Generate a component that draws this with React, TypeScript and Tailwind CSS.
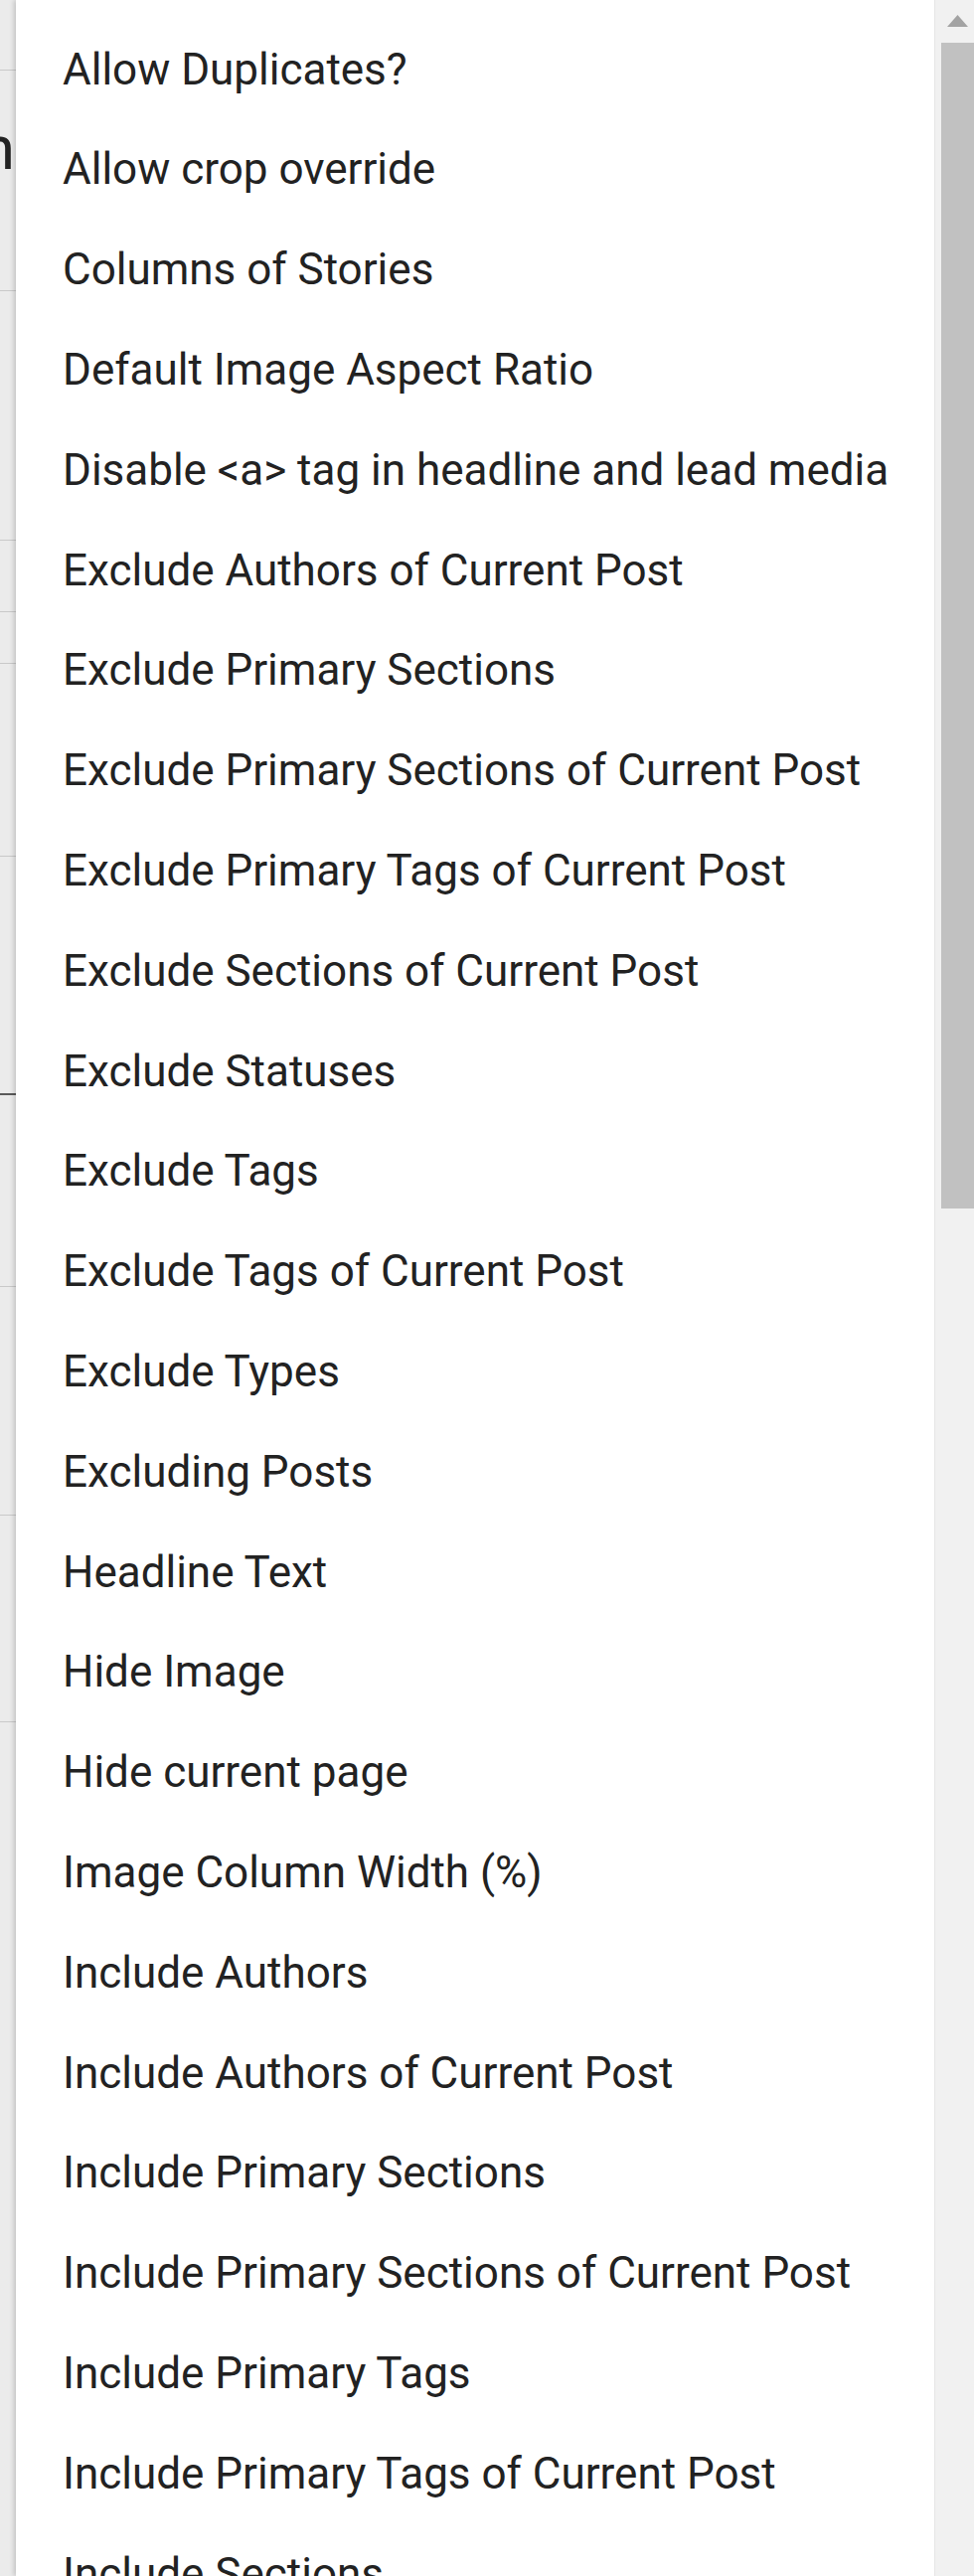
import React from "react";

const items = [
  "Allow Duplicates?",
  "Allow crop override",
  "Columns of Stories",
  "Default Image Aspect Ratio",
  "Disable <a> tag in headline and lead media",
  "Exclude Authors of Current Post",
  "Exclude Primary Sections",
  "Exclude Primary Sections of Current Post",
  "Exclude Primary Tags of Current Post",
  "Exclude Sections of Current Post",
  "Exclude Statuses",
  "Exclude Tags",
  "Exclude Tags of Current Post",
  "Exclude Types",
  "Excluding Posts",
  "Headline Text",
  "Hide Image",
  "Hide current page",
  "Image Column Width (%)",
  "Include Authors",
  "Include Authors of Current Post",
  "Include Primary Sections",
  "Include Primary Sections of Current Post",
  "Include Primary Tags",
  "Include Primary Tags of Current Post",
  "Include Sections",
];

export default function App() {
  return (
    <div
      className="flex h-[2592px] w-[980px] overflow-hidden bg-white"
      style={{ fontFamily: "Roboto, 'Noto Sans', Arial, sans-serif" }}
    >
      {/* background page strip */}
      <div className="flex w-[16px] shrink-0 flex-col overflow-hidden bg-[#ebebeb]">
        <div className="mt-[70px] h-px w-full shrink-0 bg-[#c9c9c9]" />
        <div className="mt-[47px] flex h-[62px] shrink-0 justify-end pr-[1px] text-[62px] leading-[62px] text-[#222222]">
          <span>n</span>
        </div>
        <div className="mt-[112px] h-px w-full shrink-0 bg-[#c9c9c9]" />
        <div className="mt-[250px] h-px w-full shrink-0 bg-[#c9c9c9]" />
        <div className="mt-[71px] h-px w-full shrink-0 bg-[#c9c9c9]" />
        <div className="mt-[51px] h-px w-full shrink-0 bg-[#c9c9c9]" />
        <div className="mt-[193px] h-px w-full shrink-0 bg-[#c9c9c9]" />
        <div className="mt-[238px] h-[2px] w-full shrink-0 bg-[#5a5a5a]" />
        <div className="mt-[192px] h-px w-full shrink-0 bg-[#c9c9c9]" />
        <div className="mt-[229px] h-px w-full shrink-0 bg-[#c9c9c9]" />
        <div className="mt-[207px] h-px w-full shrink-0 bg-[#c9c9c9]" />
      </div>

      {/* dropdown panel */}
      <div className="relative flex flex-1 bg-white shadow-[-2px_0_5px_rgba(0,0,0,0.18)]">
        <ul className="flex flex-1 flex-col pt-[19.2px]">
          {items.map((t) => (
            <li
              key={t}
              className="flex h-[100.8px] shrink-0 items-center whitespace-nowrap pl-[47px] text-[44px] leading-normal text-[#222222]"
            >
              {t}
            </li>
          ))}
        </ul>

        {/* scrollbar */}
        <div className="flex w-[40px] shrink-0 flex-col border-l border-[#e6e6e6] bg-[#f1f1f1]">
          <div className="ml-[12px] mt-[15px] h-[12px] w-[21px]">
            <svg width="21" height="12" viewBox="0 0 21 12">
              <polygon points="10.5,0 21,12 0,12" fill="#a3a3a3" />
            </svg>
          </div>
          <div className="ml-[6px] mt-[16px] h-[1173px] flex-none bg-[#c1c1c1]" />
        </div>
      </div>
    </div>
  );
}
